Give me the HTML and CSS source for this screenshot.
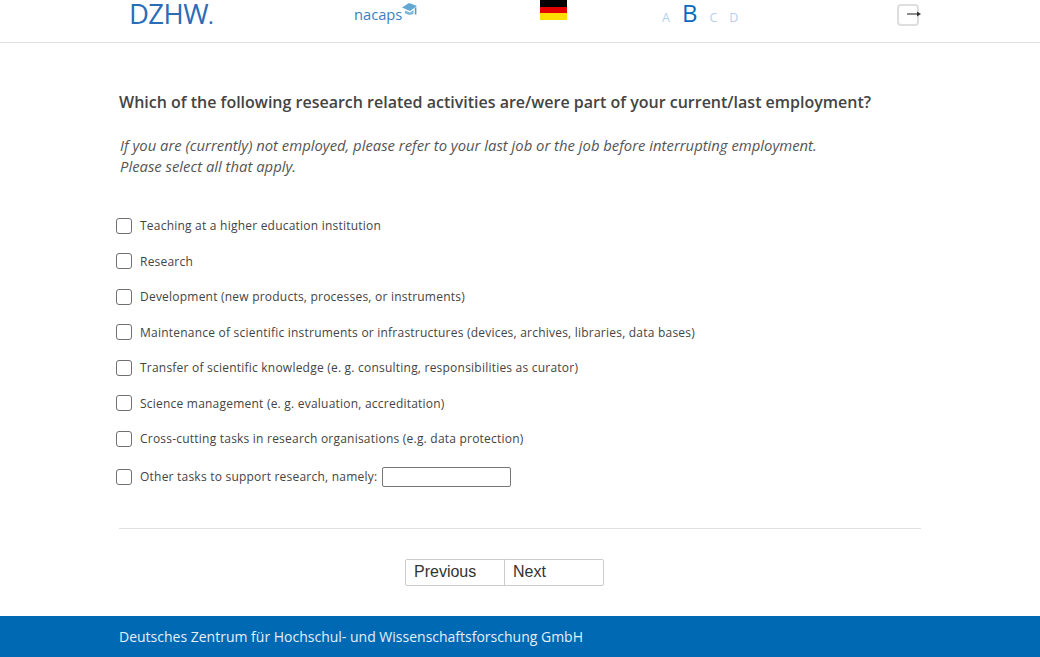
FILE: index.html
```html
<!DOCTYPE html>
<html lang="en">
<head>
<meta charset="utf-8">
<title>Survey</title>
<link rel="stylesheet" href="styles.css">
</head>
<body>
<header class="top">
  <svg class="logo-dzhw" width="90" height="30" viewBox="0 0 90 30"><text class="logo-text" x="0" y="24">DZHW<tspan class="dot">.</tspan></text></svg>
  <div class="logo-nacaps">nacaps
    <svg class="cap" width="15" height="13" viewBox="0 0 15 13"><path d="M0 4.500 L7 0 L15 3 L8 8 Z" fill="#62a8d2"/><path d="M3 7.500 L8 9.500 L11.500 7 L11.500 11 L7.500 12 L3 10.500 Z" fill="#7db8da"/><path d="M12.800 4.500 H14.400 V11.500 H12.800 Z" fill="#4d9cc9"/></svg>
  </div>
  <div class="flag"><span class="flag-black"></span><span class="flag-red"></span><span class="flag-gold"></span></div>
  <nav class="sizes"><span>A</span><span class="current">B</span><span>C</span><span>D</span></nav>
  <div class="exit">
    <svg class="exit-arrow" width="16" height="8" viewBox="0 0 16 8"><path d="M0 4 H11" stroke="#444" stroke-width="1.2"/><path d="M10 1.500 L14 4 L10 6.500 Z" fill="#333"/></svg>
  </div>
</header>
<main class="content">
  <h1 class="question">Which of the following research related activities are/were part of your current/last employment?</h1>
  <p class="hint">If you are (currently) not employed, please refer to your last job or the job before interrupting employment.<br>Please select all that apply.</p>
  <ul class="options">
    <li class="option"><span class="box"></span>Teaching at a higher education institution</li>
    <li class="option"><span class="box"></span>Research</li>
    <li class="option"><span class="box"></span>Development (new products, processes, or instruments)</li>
    <li class="option"><span class="box"></span>Maintenance of scientific instruments or infrastructures (devices, archives, libraries, data bases)</li>
    <li class="option"><span class="box"></span>Transfer of scientific knowledge (e. g. consulting, responsibilities as curator)</li>
    <li class="option"><span class="box"></span>Science management (e. g. evaluation, accreditation)</li>
    <li class="option"><span class="box"></span>Cross-cutting tasks in research organisations (e.g. data protection)</li>
    <li class="option option-other"><span class="box"></span>Other tasks to support research, namely:<span class="field"></span></li>
  </ul>
  <hr class="rule">
  <div class="pager"><span class="btn">Previous</span><span class="btn btn-next">Next</span></div>
</main>
<footer class="foot">Deutsches Zentrum für Hochschul- und Wissenschaftsforschung GmbH</footer>
</body>
</html>
```
FILE: styles.css
```css
* { box-sizing: border-box; }
html, body { margin: 0; padding: 0; }
body {
  width: 1040px;
  height: 657px;
  overflow: hidden;
  display: flex;
  flex-direction: column;
  background: #fff;
  font-family: "Open Sans", sans-serif;
  color: #444;
}
.top {
  height: 43px;
  flex: none;
  border-bottom: 1px solid #e0e0e0;
  position: relative;
  overflow: hidden;
}
.logo-dzhw, .logo-nacaps, .flag, .sizes, .exit { position: absolute; }
.logo-dzhw { left: 129px; top: 0; }
.logo-text {
  font-family: "Open Sans", sans-serif;
  font-weight: 400;
  font-size: 27.500px;
  letter-spacing: -0.600px;
  fill: #2a6cb6;
}
.dot { font-size: 22px; }
.logo-nacaps {
  left: 354px;
  top: 4px;
  font-size: 14.700px;
  line-height: 20px;
  color: #3d80bd;
}
.cap { position: absolute; left: 48px; top: -1px; }
.flag { left: 540px; top: 0; width: 27px; height: 20px; display: flex; flex-direction: column; }
.flag span { flex: 1; }
.flag-black { background: #000; }
.flag-red { background: #e30000; }
.flag-gold { background: #ffdd00; }
.sizes {
  left: 662px;
  top: 0;
  height: 26px;
  display: flex;
  align-items: flex-end;
  gap: 12px;
  font-size: 12.500px;
  line-height: 17px;
  color: #b3d1ec;
}
.sizes .current { font-size: 24px; line-height: 27px; color: #0a68bd; }
.exit {
  left: 897px;
  top: 4px;
  width: 22px;
  height: 22px;
  border: 2px solid #dedede;
  border-radius: 4px;
}
.exit-arrow { position: absolute; left: 8px; top: 4px; overflow: visible; }
.content { flex: 1; padding: 47px 119px 0; }
.question {
  margin: 0;
  font-size: 16px;
  line-height: 24px;
  font-weight: 600;
  color: #444;
}
.hint {
  margin: 21px 0 0 1px;
  font-size: 14.840px;
  line-height: 21px;
  font-style: italic;
  color: #555;
}
.options { list-style: none; margin: 31px 0 0 -3px; padding: 0; }
.option {
  height: 35.500px;
  display: flex;
  align-items: center;
  font-size: 12px;
  letter-spacing: 0.220px;
  color: #444;
}
.option-other { height: 41px; margin-top: -0.500px; }
.box {
  width: 16px;
  height: 16px;
  margin-right: 8px;
  border: 1px solid #707070;
  border-radius: 3px;
  flex: none;
}
.field {
  width: 129px;
  height: 20px;
  margin-left: 5px;
  border: 1px solid #767676;
  border-radius: 2px;
}
.rule { margin: 31px 0 0; border: 0; border-top: 1px solid #e0e0e0; }
.pager { margin-top: 30px; padding-right: 31px; display: flex; justify-content: center; }
.btn {
  width: 100px;
  height: 27px;
  padding-left: 8px;
  border: 1px solid #ccc;
  border-radius: 2px 0 0 2px;
  font-family: "Liberation Sans", sans-serif;
  font-size: 16px;
  line-height: 23px;
  color: #333;
}
.btn-next { margin-left: -1px; border-radius: 0 2px 2px 0; }
.foot {
  flex: none;
  height: 41px;
  padding-left: 119px;
  background: #0069b3;
  color: #e3eef7;
  font-size: 14px;
  line-height: 41px;
}
```
